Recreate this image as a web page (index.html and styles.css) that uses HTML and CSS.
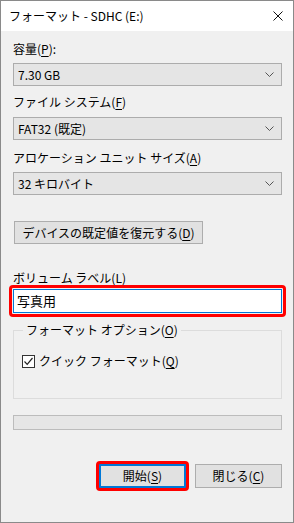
FILE: index.html
```html
<!DOCTYPE html>
<html>
<head lang="ja">
    <meta charset="UTF-8">
    <title>フォーマット - SDHC (E:)</title>
    <link rel="stylesheet" href="styles.css">
</head>
<body>
    <div class="window">
        <div class="titlebar">
            <span class="title">フォーマット - SDHC (E:)</span>
            <svg class="close" width="10" height="10" viewBox="0 0 10 10">
                <path d="M0.5 0.5 L9.5 9.5 M9.5 0.5 L0.5 9.5" stroke="#111" stroke-width="1" fill="none"/>
            </svg>
        </div>
        <div class="client">
            <div class="label lbl-cap">容量(<u>P</u>):</div>
            <div class="combo c1">
                <span>7.30 GB</span>
                <svg width="9" height="5" viewBox="0 0 9 5"><path d="M0.5 0.5 L4.5 4.5 L8.5 0.5" stroke="#555" fill="none"/></svg>
            </div>

            <div class="label lbl-fs">ファイル システム(<u>F</u>)</div>
            <div class="combo c2">
                <span>FAT32 (既定)</span>
                <svg width="9" height="5" viewBox="0 0 9 5"><path d="M0.5 0.5 L4.5 4.5 L8.5 0.5" stroke="#555" fill="none"/></svg>
            </div>

            <div class="label lbl-au">アロケーション ユニット サイズ(<u>A</u>)</div>
            <div class="combo c3">
                <span>32 キロバイト</span>
                <svg width="9" height="5" viewBox="0 0 9 5"><path d="M0.5 0.5 L4.5 4.5 L8.5 0.5" stroke="#555" fill="none"/></svg>
            </div>

            <div class="btn restore">デバイスの既定値を復元する(<u>D</u>)</div>

            <div class="label lbl-vol">ボリューム ラベル(<u>L</u>)</div>
            <div class="textbox hilite">写真用</div>

            <fieldset class="group">
                <legend>フォーマット オプション(<u>O</u>)</legend>
                <div class="check-row">
                    <span class="checkbox">
                        <svg width="11" height="11" viewBox="0 0 11 11"><path d="M1.5 5.5 L4.2 8.3 L9.5 2" stroke="#222" stroke-width="1.2" fill="none"/></svg>
                    </span>
                    <span>クイック フォーマット(<u>Q</u>)</span>
                </div>
            </fieldset>

            <div class="progress"></div>

            <div class="buttons">
                <div class="btn default hilite">開始(<u>S</u>)</div>
                <div class="btn">閉じる(<u>C</u>)</div>
            </div>
        </div>
    </div>
</body>
</html>
```

FILE: styles.css
```css
*{
    margin: 0;
    padding: 0;
    box-sizing: border-box;
}
body {
    font-family: "Noto Sans CJK JP", "Noto Sans", sans-serif;
    font-size: 12px;
    line-height: 16px;
    color: #000;
    background: #fff;
}
u {
    text-decoration-thickness: 1px;
    text-underline-offset: 2px;
}
.window {
    width: 294px;
    height: 523px;
    border: 1px solid #8a8a8a;
    background: #f0f0f0;
    display: flex;
    flex-direction: column;
}
.titlebar {
    height: 30px;
    background: #fff;
    display: flex;
    align-items: center;
    justify-content: space-between;
    padding: 0 10px 0 8px;
}
.client {
    padding: 0 11px 0 12px;
    display: flex;
    flex-direction: column;
}
.label {
    height: 16px;
    white-space: nowrap;
}
.lbl-cap { margin-top: 10px; }
.lbl-fs { margin-top: 8px; }
.lbl-au { margin-top: 10px; }
.lbl-vol { margin-top: 26px; }
.combo {
    height: 23px;
    background: #e5e5e5;
    border: 1px solid #acacac;
    display: flex;
    align-items: center;
    justify-content: space-between;
    padding: 0 4px 0 4px;
}
.combo svg {
    margin-right: 3px;
}
.c1 { margin-top: 6px; }
.c2 { margin-top: 7px; }
.c3 { margin-top: 6px; }
.btn {
    height: 24px;
    background: #e1e1e1;
    border: 1px solid #adadad;
    display: flex;
    align-items: center;
    justify-content: center;
    white-space: nowrap;
}
.restore {
    margin-top: 26px;
    margin-left: 1px;
    width: 189px;
    height: 23px;
}
.textbox {
    margin-top: 3px;
    height: 24px;
    background: #fff;
    border: 1px solid #0078d7;
    padding-left: 3px;
    display: flex;
    align-items: center;
    font-size: 13px;
}
.hilite {
    position: relative;
}
.hilite::after {
    content: "";
    position: absolute;
    top: -5px;
    left: -5px;
    right: -5px;
    bottom: -5px;
    border: 3px solid #ff0000;
    border-radius: 4px;
}
.group {
    margin-top: 9px;
    border: 1px solid #dcdcdc;
    padding: 0 8px;
    height: 77px;
}
.group legend {
    margin-left: 1px;
    padding: 0 3px;
}
.check-row {
    margin-top: 15px;
    display: flex;
    align-items: center;
    gap: 4px;
}
.checkbox {
    width: 13px;
    height: 13px;
    border: 1px solid #333;
    background: #fff;
    display: flex;
    align-items: center;
    justify-content: center;
}
.progress {
    margin-top: 16px;
    height: 15px;
    background: #e6e6e6;
    border: 1px solid #bcbcbc;
}
.buttons {
    margin-top: 34px;
    display: flex;
    justify-content: flex-end;
    gap: 9px;
}
.buttons .btn {
    width: 87px;
}
.buttons .default {
    border: 2px solid #0078d7;
}
```
